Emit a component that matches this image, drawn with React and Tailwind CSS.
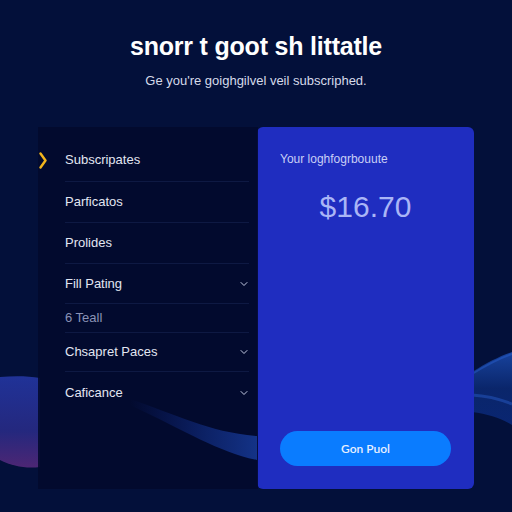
import { ChevronDown } from "lucide-react";

const menu = [
  { label: "Subscripates", h: "h-[43px]", active: true },
  { label: "Parficatos", h: "h-[41px]" },
  { label: "Prolides", h: "h-[41px]" },
  { label: "Fill Pating", h: "h-[40px]", caret: true },
  { label: "6 Teall", h: "h-[29px]", dim: true },
  { label: "Chsapret Paces", h: "h-[39px]", caret: true },
  { label: "Caficance", h: "h-[41px]", caret: true, last: true },
];

const Waves = () => (
  <svg className="absolute inset-0 w-full h-full" viewBox="0 0 512 512" fill="none">
    <defs>
      <linearGradient id="leftWave" x1="0" y1="0" x2="0" y2="1">
        <stop offset="0" stopColor="#2538a8" />
        <stop offset="0.6" stopColor="#2a2c8a" />
        <stop offset="1" stopColor="#5a2a7e" />
      </linearGradient>
      <linearGradient id="rightWave" x1="0" y1="0" x2="0" y2="1">
        <stop offset="0" stopColor="#1a48a8" />
        <stop offset="0.5" stopColor="#0b2870" />
        <stop offset="1" stopColor="#0a2878" />
      </linearGradient>
      <linearGradient id="streak" x1="0" y1="0" x2="1" y2="0">
        <stop offset="0" stopColor="#1a3cc0" stopOpacity="0" />
        <stop offset="0.6" stopColor="#1d48c0" stopOpacity="0.7" />
        <stop offset="1" stopColor="#2254d0" stopOpacity="1" />
      </linearGradient>
    </defs>
    <path d="M0 377 C14 376 28 376 40 378 L40 467 C26 469 12 466 0 460 Z" fill="url(#leftWave)" opacity="0.85" />
    <path d="M472 372 C488 362 500 356 512 352 L512 425 C500 418 488 414 472 412 Z" fill="url(#rightWave)" opacity="0.9" />
    <path d="M472 374 C488 364 500 358 512 354" stroke="#2a62d0" strokeWidth="2" opacity="0.45" />
    <path d="M472 395 C490 396 502 400 512 404" stroke="#2a60cc" strokeWidth="3" opacity="0.45" />
  </svg>
);

// active marker, a tall narrow chevron
const Marker = () => (
  <svg className="absolute -left-[26px] w-[8px] h-[17px]" viewBox="0 0 8 17" fill="none">
    <path d="M1.5 1.5 L6.5 8.5 L1.5 15.5" stroke="#f2b51c" strokeWidth="2.4" strokeLinecap="round" strokeLinejoin="round" />
  </svg>
);

export default function App() {
  return (
    <div className="relative w-[512px] h-[512px] overflow-hidden bg-[#03103a] font-['Liberation_Sans',Arial,sans-serif]">
      <Waves />

      <div className="relative flex flex-col items-center pt-[32px]">
        <h1 className="text-[25px] leading-[28px] font-bold text-white tracking-[-0.2px]">
          snorr t goot sh littatle
        </h1>
        <p className="mt-[13px] text-[13px] leading-[16px] text-[#d6dbea]">
          Ge you're goighgilvel veil subscriphed.
        </p>
      </div>

      <div className="relative flex mt-[38px] pl-[38px]">
        {/* left nav panel, streak of the wave shows through it */}
        <div className="relative w-[220px] h-[362px] bg-[#020a2d]/90 pl-[27px] pt-[12px]">
          <svg className="absolute inset-0 w-full h-full" viewBox="0 0 220 362" fill="none">
            <path d="M92 272 C140 288 170 305 219 309 L219 333 C180 325 150 305 92 278 Z" fill="url(#streak)" opacity="0.55" />
          </svg>
          <ul className="relative w-[184px]">
            {menu.map((item) => (
              <li
                key={item.label}
                className={`relative flex items-center justify-between ${item.h} ${item.last ? "" : "border-b border-[#0e1943]"}`}
              >
                {item.active && <Marker />}
                <span className={`text-[13px] ${item.dim ? "text-[#8a92b6]" : "text-[#e2e6f2]"}`}>{item.label}</span>
                {item.caret && <ChevronDown className="w-[12px] h-[12px] text-[#c3cae3] -mr-[1px]" strokeWidth={2} />}
              </li>
            ))}
          </ul>
        </div>

        {/* plan card */}
        <div className="-ml-[1px] w-[217px] h-[362px] rounded-[6px] bg-[#1f2dc0] px-[23px] pt-[24px] pb-[23px] flex flex-col">
          <p className="text-[12px] leading-[16px] text-[#c9cff5]">Your loghfogrbouute</p>
          <p className="mt-[23px] text-center text-[30px] leading-[34px] text-[#aab5f6]">$16.70</p>
          <button className="mt-auto h-[35px] w-full rounded-full bg-[#0a7cff] text-[12px] font-semibold text-[#e8f0ff] font-['Lato',sans-serif]">
            Gon Puol
          </button>
        </div>
      </div>
    </div>
  );
}
